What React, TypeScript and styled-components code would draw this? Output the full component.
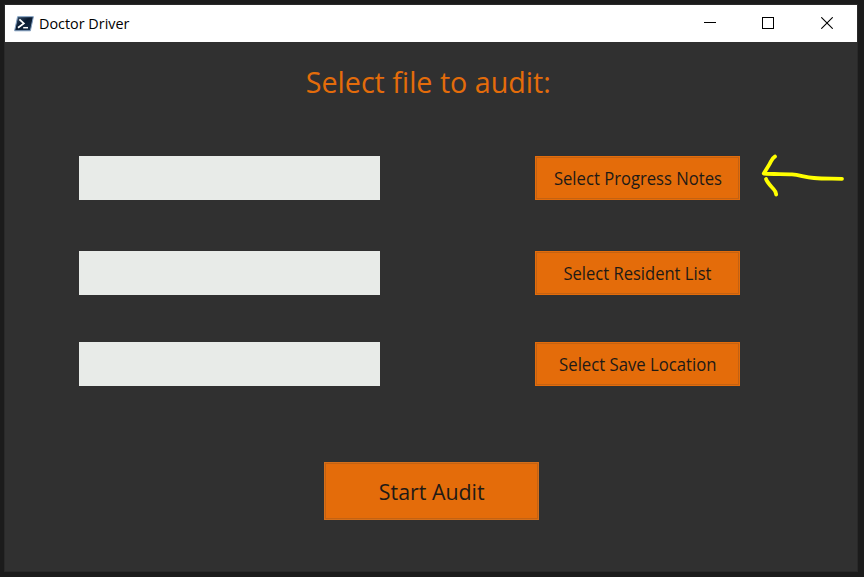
import React from "react";
import styled, { createGlobalStyle } from "styled-components";

const GlobalStyle = createGlobalStyle`
  * { box-sizing: border-box; }
  body { margin: 0; background: #1b1b1b; font-family: "Open Sans", "Noto Sans", sans-serif; }
`;

const Desktop = styled.div`
  position: relative;
  width: 864px;
  height: 577px;
  padding: 4px 6px 5px 4px;
  background: #1b1b1b;
  overflow: hidden;
`;

const Window = styled.main`
  display: flex;
  flex-direction: column;
  width: 854px;
  height: 568px;
  border: 1px solid #292929;
  background: #303030;
`;

const TitleBar = styled.header`
  display: flex;
  align-items: center;
  flex: none;
  height: 37px;
  padding: 0 1px 0 9px;
  background: #fff;
  color: #000;
`;

const WindowTitle = styled.div`
  flex: 1;
  margin-left: 5px;
`;

const Label = styled.span<{ $size: number; $scale: number; $dy?: number; $left?: boolean }>`
  display: inline-block;
  font-size: ${(p) => p.$size}px;
  font-weight: 400;
  line-height: 1.3;
  white-space: nowrap;
  transform: translateY(${(p) => p.$dy ?? 0}px) scaleX(${(p) => p.$scale});
  transform-origin: ${(p) => (p.$left ? "left" : "center")} center;
`;

const Controls = styled.div`
  display: flex;
`;

const Control = styled.div`
  display: flex;
  align-items: center;
  justify-content: center;
  width: 58.5px;
  height: 37px;
  padding-bottom: 1px;
`;

const Heading = styled.h1`
  display: flex;
  justify-content: center;
  margin: 0;
  height: 114px;
  padding-top: 20px;
  padding-right: 5px;
  font-weight: 400;
  color: #e46c0a;
`;

const Fields = styled.section`
  display: grid;
  grid-template-columns: 301px 205px;
  grid-template-rows: 48px 44px 44px;
  column-gap: 155px;
  row-gap: 47px;
  padding-left: 74px;
`;

const FileInput = styled.input`
  width: 301px;
  height: 44px;
  padding: 0 8px;
  border: 0;
  border-radius: 0;
  outline: 0;
  background: #e8ebe8;
  font: 18px "Open Sans", sans-serif;
`;

const ActionButton = styled.button<{ $primary?: boolean }>`
  display: flex;
  align-items: center;
  justify-content: center;
  width: ${(p) => (p.$primary ? 215 : 205)}px;
  height: ${(p) => (p.$primary ? 58 : 44)}px;
  padding: 0;
  border: 1px solid ${(p) => (p.$primary ? "#d56f1a" : "#e46c0a")};
  border-radius: 0;
  background: #e46c0a;
  box-shadow: inset 0 0 0 1px #c46212;
  color: #1e1a16;
  font-family: inherit;
`;

const Footer = styled.footer`
  padding: 76px 0 0 319px;
`;

const Annotation = styled.svg`
  position: absolute;
  left: 754px;
  top: 148px;
`;

function TerminalIcon() {
  return (
    <svg width="20" height="16" viewBox="0 0 20 16">
      <defs>
        <linearGradient id="terminal" x1="0" y1="0" x2="1" y2="1">
          <stop offset="0" stopColor="#3d5670" />
          <stop offset=".45" stopColor="#091a30" />
          <stop offset="1" stopColor="#1d3550" />
        </linearGradient>
      </defs>
      <path d="M3.6 .7H19.4L16.4 14.8H.6Z" fill="url(#terminal)" stroke="#86a3c4" strokeWidth="1" />
      <path d="M5.4 3.3L9.8 7.4L4 11.7" fill="none" stroke="#fff" strokeWidth="1.8" />
      <path d="M9.2 11.7H14" stroke="#fff" strokeWidth="1.5" />
    </svg>
  );
}

const rows = [
  { label: "Select Progress Notes", scale: 0.924 },
  { label: "Select Resident List", scale: 0.92 },
  { label: "Select Save Location", scale: 0.928 },
];

export default function App() {
  return (
    <Desktop>
      <GlobalStyle />
      <Window>
        <TitleBar>
          <TerminalIcon />
          <WindowTitle>
            <Label $size={15} $scale={0.958} $dy={-1} $left>Doctor Driver</Label>
          </WindowTitle>
          <Controls>
            <Control>
              <svg width="12" height="12" shapeRendering="crispEdges"><path d="M0 5.5H12" stroke="#000" /></svg>
            </Control>
            <Control>
              <svg width="12" height="12" shapeRendering="crispEdges"><path d="M.5 .5H11.5V11.5H.5Z" fill="none" stroke="#000" /></svg>
            </Control>
            <Control>
              <svg width="12" height="12"><path d="M.3 .3L11.7 11.7M11.7 .3L.3 11.7" stroke="#000" strokeWidth="1.1" /></svg>
            </Control>
          </Controls>
        </TitleBar>
        <Heading>
          <Label $size={30} $scale={0.955}>Select file to audit:</Label>
        </Heading>
        <Fields>
          {rows.map((row) => (
            <React.Fragment key={row.label}>
              <FileInput aria-label={row.label} />
              <ActionButton>
                <Label $size={18} $scale={row.scale} $dy={1}>{row.label}</Label>
              </ActionButton>
            </React.Fragment>
          ))}
        </Fields>
        <Footer>
          <ActionButton $primary>
            <Label $size={22.5} $scale={0.95} $dy={1}>Start Audit</Label>
          </ActionButton>
        </Footer>
      </Window>
      <Annotation width="96" height="54" viewBox="0 0 96 54" fill="none" stroke="#ffff00" strokeWidth="3.8" strokeLinecap="round" strokeLinejoin="round">
        <path d="M21 8.5C18 10 17 14 15 17L9.8 25.5C18 26.3 29 25.8 38 26.3C46 27 51 29.3 60 30C69 31 78 30.5 88 30.8" />
        <path d="M12 31C13.5 35 17 38 19.5 41C21.5 43 22 44 22.2 46.5" />
      </Annotation>
    </Desktop>
  );
}
